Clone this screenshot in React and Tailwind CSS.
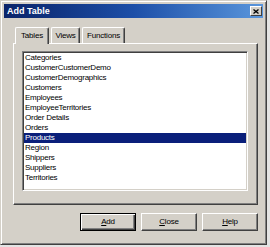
const tables = [
  "Categories",
  "CustomerCustomerDemo",
  "CustomerDemographics",
  "Customers",
  "Employees",
  "EmployeeTerritories",
  "Order Details",
  "Orders",
  "Products",
  "Region",
  "Shippers",
  "Suppliers",
  "Territories",
];

function Button({ children, isDefault }) {
  return (
    <button
      className={
        isDefault
          ? "w-[56px] h-[18px] bg-[#d4d0c8] border border-black shadow-[inset_1px_1px_#ffffff,inset_-1px_-1px_#404040,inset_-2px_-2px_#808080] text-[8px] tracking-[-0.2px] text-black leading-none"
          : "w-[56px] h-[18px] bg-[#d4d0c8] border border-t-white border-l-white border-r-[#404040] border-b-[#404040] shadow-[inset_-1px_-1px_#808080] text-[8px] tracking-[-0.2px] text-black leading-none"
      }
    >
      {children}
    </button>
  );
}

function Tab({ label, active, width }) {
  return (
    <div
      className={
        active
          ? "relative z-10 h-[17px] -mb-px flex items-center justify-center bg-[#d4d0c8] border-t border-l border-r border-t-white border-l-white border-r-[#404040] rounded-t-[2px] shadow-[inset_-1px_0_#808080]"
          : "h-[16px] flex items-center justify-center bg-[#d4d0c8] border-t border-l border-r border-t-white border-l-white border-r-[#404040] rounded-t-[2px] shadow-[inset_-1px_0_#808080]"
      }
      style={{ width }}
    >
      <span className="text-[8px] tracking-[-0.2px] text-black leading-none">{label}</span>
    </div>
  );
}

export default function App() {
  return (
    <div className="w-[270px] h-[247px] bg-[#e4e4e4] font-['Liberation_Sans',Arial,sans-serif]">
      <div className="flex flex-col w-[267px] h-[245px] bg-[#d4d0c8] border border-t-[#d4d0c8] border-l-[#d4d0c8] border-r-[#404040] border-b-[#404040] shadow-[inset_1px_1px_#ffffff,inset_-1px_-1px_#808080] p-[3px]">
        {/* title bar */}
        <div className="flex items-center justify-between h-[14px] pl-[3px] pr-[1px] bg-linear-to-r from-[#0a246a] via-[#1d4fa8] to-[#5a96dc]">
          <span className="text-white font-bold text-[9px] leading-none">Add Table</span>
          <div className="flex items-center justify-center w-[12px] h-[10px] bg-[#d4d0c8] border border-t-white border-l-white border-r-[#404040] border-b-[#404040]">
            <svg width="6" height="5" viewBox="0 0 6 5">
              <path d="M0.5 0.5 L5.5 4.5 M5.5 0.5 L0.5 4.5" stroke="#000" strokeWidth="1.3" />
            </svg>
          </div>
        </div>

        {/* body */}
        <div className="flex flex-col pl-[9px] pr-[5px] pt-[9px]">
          <div className="flex items-end gap-[2px] pl-[2px]">
            <Tab label="Tables" active width={34} />
            <Tab label="Views" width={29} />
            <Tab label="Functions" width={43} />
          </div>

          <div className="h-[162px] border border-t-white border-l-white border-r-[#404040] border-b-[#404040] shadow-[inset_-1px_-1px_#808080] pl-[8px] pt-[7px]">
            <div className="w-[226px] h-[140px] bg-white border border-t-[#808080] border-l-[#808080] border-r-white border-b-white shadow-[inset_1px_1px_#404040,inset_-1px_-1px_#d4d0c8] p-px">
              {tables.map((t) => (
                <div
                  key={t}
                  className={
                    t === "Products"
                      ? "h-[10px] pl-px text-[8px] leading-[10px] tracking-[-0.25px] bg-[#0a1f7a] text-white"
                      : "h-[10px] pl-px text-[8px] leading-[10px] tracking-[-0.25px] text-black"
                  }
                >
                  {t}
                </div>
              ))}
            </div>
          </div>

          <div className="flex justify-end gap-[5px] mt-[8px]">
            <Button isDefault>
              <span className="underline">A</span>dd
            </Button>
            <Button>
              <span className="underline">C</span>lose
            </Button>
            <Button>
              <span className="underline">H</span>elp
            </Button>
          </div>
        </div>
      </div>
    </div>
  );
}
